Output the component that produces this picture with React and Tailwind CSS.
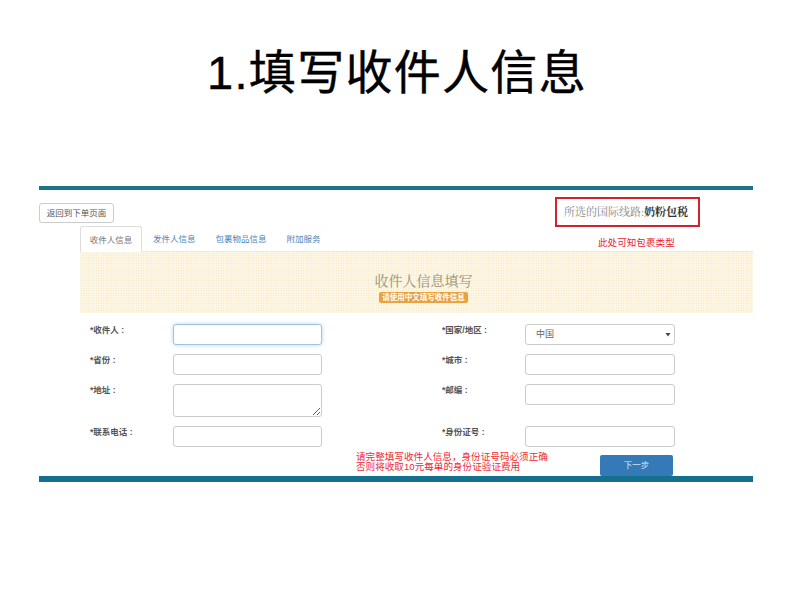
const CJK = "font-['Liberation_Sans','Noto_Sans_CJK_SC',sans-serif]";
const SERIF = "font-['Liberation_Serif','Noto_Serif_CJK_SC','Noto_Sans_CJK_SC',serif]";

function Label({ children }) {
  return <label className="block w-[83px] shrink-0 text-[8.5px] leading-[13px] font-bold text-[#555]">{children}</label>;
}

function Field({ label, tall, focus, select, wide, className = "" }) {
  const width = wide ? "w-[150px]" : "w-[149px]";
  return (
    <div className={`flex ${className}`}>
      <Label>{label}</Label>
      {select ? (
        <div className={`${width} h-[21px] flex items-center justify-between pl-[10px] pr-[3px] bg-white border border-[#ccc] rounded-[3px] text-[9px] text-[#666]`}>
          <span className="mt-[1px]">中国</span>
          <svg width="6" height="5" viewBox="0 0 6 5" className="text-[#444]">
            <path d="M0.5 1h5L3 4.5z" fill="currentColor" />
          </svg>
        </div>
      ) : tall ? (
        <textarea className={`block ${width} h-[33px] bg-white border border-[#ccc] rounded-[3px]`} />
      ) : (
        <input
          type="text"
          className={`block ${width} h-[21px] bg-white border rounded-[3px] ${
            focus ? "border-[#9cc4e8] shadow-[0_0_4px_#b5d5f2]" : "border-[#ccc]"
          }`}
        />
      )}
    </div>
  );
}

export default function App() {
  return (
    <div className={`w-[792px] h-[594px] bg-white overflow-hidden ${CJK}`}>
      <h1 className="h-[186px] pt-[42px] pl-[2px] text-center text-[47px] leading-[62px] tracking-[1.3px] font-normal [-webkit-text-stroke:0.4px_black] text-black">
        1.填写收件人信息
      </h1>

      <div className="mx-[39px] w-[714px] h-[296px] flex flex-col border-t-[4px] border-b-[6px] border-t-[#1d7389] border-b-[#14708f] relative">
        <div className="h-[37px] flex items-start justify-between">
          <button className="mt-[13px] w-[75px] h-[20px] bg-white border border-[#ccc] rounded-[3px] text-[8.5px] text-[#555]">
            返回到下单页面
          </button>
          <div className={`mt-[7px] mr-[53px] w-[145px] h-[30px] flex items-center pl-[7px] border-2 border-[#d2222d] text-[11px] text-[#888] ${SERIF}`}>
            所选的国际线路:<span className="font-bold text-[#333]">奶粉包税</span>
          </div>
        </div>

        <div className="ml-[41px] h-[25px] flex items-end border-b border-[#e8e8e8] text-[8.5px] text-[#4a86b8] relative">
          <span className="h-[26px] w-[62px] pt-px flex items-center justify-center bg-white border border-b-0 border-[#ddd] rounded-t-[3px] text-[#777] -mb-px">
            收件人信息
          </span>
          <span className="h-[25px] pt-px flex items-center ml-[11px]">发件人信息</span>
          <span className="h-[25px] pt-px flex items-center ml-[20px]">包裹物品信息</span>
          <span className="h-[25px] pt-px flex items-center ml-[20px]">附加服务</span>
          <span className="absolute left-[518px] top-[9px] text-[9.6px] leading-[14px] text-[#e8242f]">此处可知包裹类型</span>
        </div>

        <div className="ml-[41px] h-[61px] pl-[14px] flex flex-col items-center bg-[#fcf6e4] bg-[radial-gradient(#f3e0b0_0.7px,transparent_0.8px)] bg-[length:2.5px_2.5px]">
          <div className={`mt-[21px] text-[14px] leading-[18px] text-[#998f77] ${SERIF}`}>收件人信息填写</div>
          <div className="mt-[1px] h-[11px] px-[3px] flex items-center rounded-[2px] bg-[#e8a33d] text-[7.5px] font-bold text-white">
            请使用中文填写收件信息
          </div>
        </div>

        <div className="ml-[51px] mt-[11px] grid grid-cols-[352px_1fr]">
          <div className="flex flex-col gap-[9px]">
            <Field label="*收件人 :" focus />
            <Field label="*省份 :" />
            <Field label="*地址 :" tall />
            <Field label="*联系电话 :" />
          </div>
          <div className="flex flex-col gap-[9px]">
            <Field label="*国家/地区 :" select wide />
            <Field label="*城市 :" wide />
            <Field label="*邮编 :" wide className="h-[33px]" />
            <Field label="*身份证号 :" wide />
          </div>
        </div>

        <div className="mt-[4px] ml-[317px] flex items-start">
          <p className="w-[244px] mt-[1px] text-[9.6px] leading-[10px] text-[#ee2a35]">
            请完整填写收件人信息，身份证号码必须正确
            <br />
            否则将收取10元每单的身份证验证费用
          </p>
          <button className="mt-[4px] w-[73px] h-[21px] bg-[#337ab7] rounded-[2px] text-[8.5px] text-[#dbe8f3]">下一步</button>
        </div>
      </div>
    </div>
  );
}
